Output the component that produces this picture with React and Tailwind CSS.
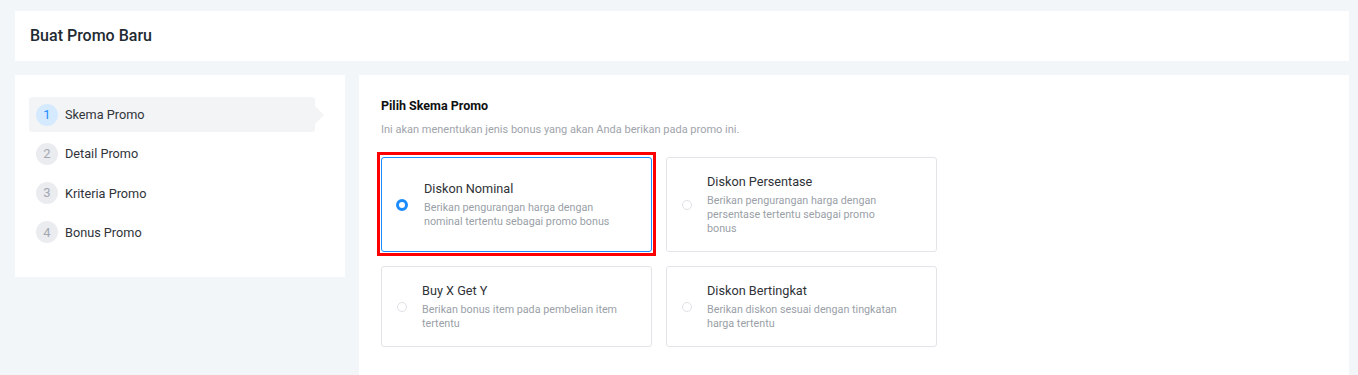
import React from "react";

const steps = [
  { n: 1, label: "Skema Promo", active: true },
  { n: 2, label: "Detail Promo" },
  { n: 3, label: "Kriteria Promo" },
  { n: 4, label: "Bonus Promo" },
];

const options = [
  {
    title: "Diskon Nominal",
    desc: "Berikan pengurangan harga dengan nominal tertentu sebagai promo bonus",
    selected: true,
  },
  {
    title: "Diskon Persentase",
    desc: "Berikan pengurangan harga dengan persentase tertentu sebagai promo bonus",
  },
  {
    title: "Buy X Get Y",
    desc: "Berikan bonus item pada pembelian item tertentu",
  },
  {
    title: "Diskon Bertingkat",
    desc: "Berikan diskon sesuai dengan tingkatan harga tertentu",
  },
];

function Option({ title, desc, selected }) {
  return (
    <div
      className={
        "relative flex items-center rounded-[3px] border bg-white py-[15px] pl-[14px] " +
        (selected ? "border-[#1a8cff]" : "border-[#e2e4e8]")
      }
    >
      {selected && (
        <div className="pointer-events-none absolute -left-[5px] -top-[6px] -right-[5px] -bottom-[5px] border-[3px] border-[#ff0000]" />
      )}
      <div className="flex w-[12px] shrink-0 items-center justify-center">
        {selected ? (
          <div className="h-[12px] w-[12px] rounded-full border-[3px] border-[#1a8cff] bg-white" />
        ) : (
          <div className="h-[10px] w-[10px] rounded-full border-[1.5px] border-[#dfe1e6] bg-white" />
        )}
      </div>
      <div className={selected ? "ml-[16px]" : "ml-[14px]"}>
        <div className="mb-[3px] text-[12.7px] leading-[18px] text-[#2f3237]">{title}</div>
        <div className="w-[197px] text-[10.75px] leading-[14px] text-[#9a9fa8]">{desc}</div>
      </div>
    </div>
  );
}

export default function App() {
  return (
    <div
      className="min-h-[375px] bg-[#f3f6f9] pl-[15px] pr-[9px] pt-[11px]"
      style={{ fontFamily: "Roboto, 'Noto Sans', sans-serif" }}
    >
      <div className="flex h-[50px] items-center bg-white px-[15px]">
        <h1 className="text-[16px] font-medium text-[#1f2a33]">Buat Promo Baru</h1>
      </div>

      <div className="mt-[14px] flex items-start gap-[14px]">
        <div className="w-[330px] shrink-0 bg-white pb-[27px] pl-[14px] pr-[30px] pt-[22px]">
          <div className="flex flex-col gap-[4.3px]">
            {steps.map((s) => (
              <div
                key={s.n}
                className={
                  "relative flex h-[35px] items-center rounded-[3px] pl-[7px] " +
                  (s.active ? "bg-[#f3f4f6]" : "")
                }
              >
                <div
                  className={
                    "flex h-[22px] w-[22px] items-center justify-center rounded-full text-[13px] " +
                    (s.active
                      ? "bg-[#d5eaff] text-[#1a8cff]"
                      : "bg-[#eaecf0] text-[#a3a8b0]")
                  }
                >
                  {s.n}
                </div>
                <span className="ml-[7px] text-[12.7px] text-[#30343a]">{s.label}</span>
                {s.active && (
                  <div className="absolute -right-[9px] top-1/2 h-0 w-0 -translate-y-1/2 border-y-[9px] border-l-[9px] border-y-transparent border-l-[#f3f4f6]" />
                )}
              </div>
            ))}
          </div>
        </div>

        <div className="min-h-[300px] flex-1 bg-white pl-[22px] pt-[23px]">
          <h2 className="text-[12.5px] font-bold leading-[16px] text-[#111]">Pilih Skema Promo</h2>
          <p className="mt-[9px] text-[11px] leading-[14px] text-[#a0a4ab]">
            Ini akan menentukan jenis bonus yang akan Anda berikan pada promo ini.
          </p>
          <div className="mt-[20px] grid w-[556px] grid-cols-2 gap-[14px]">
            {options.map((o) => (
              <Option key={o.title} {...o} />
            ))}
          </div>
        </div>
      </div>
    </div>
  );
}
